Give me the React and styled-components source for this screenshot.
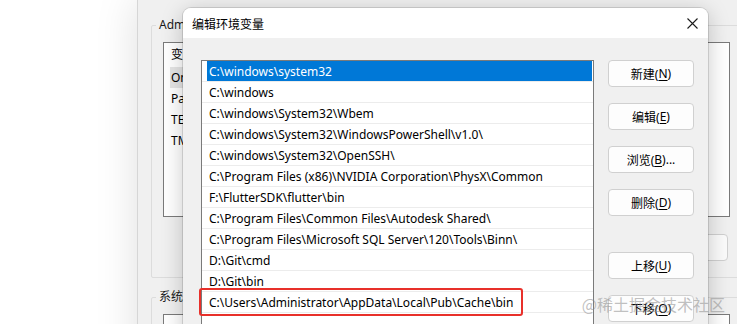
import styled, { createGlobalStyle } from 'styled-components';

const GlobalStyle = createGlobalStyle`
  html, body {
    margin: 0;
    padding: 0;
    background: #ffffff;
  }
  body {
    font-family: "Noto Sans", "Noto Sans CJK SC", sans-serif;
    color: #000;
  }
`;

const userVars = ['OneDrive', 'Path', 'TEMP', 'TMP'];

const paths = [
    'C:\\windows\\system32',
    'C:\\windows',
    'C:\\windows\\System32\\Wbem',
    'C:\\windows\\System32\\WindowsPowerShell\\v1.0\\',
    'C:\\windows\\System32\\OpenSSH\\',
    'C:\\Program Files (x86)\\NVIDIA Corporation\\PhysX\\Common',
    'F:\\FlutterSDK\\flutter\\bin',
    'C:\\Program Files\\Common Files\\Autodesk Shared\\',
    'C:\\Program Files\\Microsoft SQL Server\\120\\Tools\\Binn\\',
    'D:\\Git\\cmd',
    'D:\\Git\\bin',
    'C:\\Users\\Administrator\\AppData\\Local\\Pub\\Cache\\bin'
];

const buttons = [
    { text: '新建', key: 'N' },
    { text: '编辑', key: 'E' },
    { text: '浏览', key: 'B', more: true },
    { text: '删除', key: 'D' },
    { text: '上移', key: 'U', spaced: true },
    { text: '下移', key: 'O' }
];

export default function App() {
    return (
        <Desktop>
            <GlobalStyle />
            <BackWindow>
                <Group>
                    <Legend>Administrator 的用户变量(U)</Legend>
                    <VarList>
                        <VarHeader>变量</VarHeader>
                        {userVars.map((v, i) => (
                            <VarRow key={v} $active={i === 0}>{v}</VarRow>
                        ))}
                    </VarList>
                    <BackButtons>
                        <BackButton>新建(N)...</BackButton>
                        <BackButton>编辑(E)...</BackButton>
                        <BackButton>删除(D)</BackButton>
                    </BackButtons>
                </Group>
                <Group $second>
                    <Legend>系统变量(S)</Legend>
                    <VarList />
                </Group>
            </BackWindow>

            <Dialog>
                <TitleBar>
                    <span>编辑环境变量</span>
                    <svg width="11" height="11" viewBox="0 0 11 11">
                        <path d="M0.5 0.5 L10.5 10.5 M10.5 0.5 L0.5 10.5" stroke="#1b1b1b" strokeWidth="1.1" />
                    </svg>
                </TitleBar>
                <Body>
                    <PathList>
                        {paths.map((p, i) => (
                            <PathRow key={p}>
                                <PathText $selected={i === 0}>
                                    <Label>
                                        {p}
                                        {i === paths.length - 1 && <Mark />}
                                    </Label>
                                </PathText>
                            </PathRow>
                        ))}
                    </PathList>
                    <ButtonColumn>
                        {buttons.map(b => (
                            <Button key={b.key} $spaced={b.spaced}>
                                {b.text}(<u>{b.key}</u>){b.more ? '...' : ''}
                            </Button>
                        ))}
                    </ButtonColumn>
                </Body>
            </Dialog>

            <Watermark>@稀土掘金技术社区</Watermark>
        </Desktop>
    );
}

const Desktop = styled.div`
    position: relative;
    width: 737px;
    height: 324px;
    overflow: hidden;
    background: #ffffff;
    font-size: 12px;
`;

const BackWindow = styled.div`
    position: absolute;
    left: 137px;
    top: -1px;
    width: 640px;
    height: 420px;
    box-sizing: border-box;
    padding: 17px 0 0 13px;
    background: #f0f0f0;
    border-left: 1px solid #d6d6d6;
    box-shadow: 0 0 40px rgba(0, 0, 0, 0.13);
    display: flex;
    flex-direction: column;
`;

const Group = styled.fieldset`
    margin: ${props => props.$second ? '10px' : '0'} 0 0 0;
    padding: 8px 11px 16px 11px;
    width: 600px;
    border: 1px solid #dcdcdc;
    border-radius: 2px;
    min-inline-size: 0;
`;

/* only the start of the caption shows past the dialog */
const Legend = styled.legend`
    margin-left: -7px;
    padding: 0 0 0 3px;
    max-width: 24px;
    overflow: hidden;
    white-space: nowrap;
    font-size: 12px;
    line-height: 18px;
    color: #1a1a1a;
`;

const VarList = styled.div`
    width: 567px;
    height: 175px;
    box-sizing: border-box;
    background: #ffffff;
    border: 1px solid #7a7a7a;
    padding-left: 6px;
`;

const VarHeader = styled.div`
    height: 24px;
    line-height: 24px;
    padding-left: 1px;
`;

const VarRow = styled.div`
    width: 140px;
    height: 21px;
    line-height: 21px;
    padding-left: 1px;
    background: ${props => props.$active ? '#e5e5e5' : 'transparent'};
`;

const BackButtons = styled.div`
    display: flex;
    justify-content: flex-end;
    gap: 12px;
    margin-top: 17px;
    width: 565px;
`;

const BackButton = styled.div`
    width: 86px;
    height: 27px;
    box-sizing: border-box;
    border: 1px solid #d0d0d0;
    border-radius: 4px;
    background: #fbfbfb;
    display: flex;
    align-items: center;
    justify-content: center;
`;

const Dialog = styled.div`
    position: absolute;
    left: 183px;
    top: 8px;
    width: 525px;
    height: 340px;
    background: #f0f0f0;
    border-radius: 8px 8px 0 0;
    box-shadow: 0 0 0 1px rgba(0, 0, 0, 0.12), 0 4px 22px rgba(0, 0, 0, 0.22);
    display: flex;
    flex-direction: column;
`;

const TitleBar = styled.div`
    height: 30px;
    flex-shrink: 0;
    background: #ffffff;
    border-radius: 8px 8px 0 0;
    display: flex;
    align-items: center;
    justify-content: space-between;
    padding: 1px 10px 0 9px;
    box-sizing: border-box;
    font-size: 12px;
    color: #000;
`;

const Body = styled.div`
    display: flex;
    gap: 14px;
    padding: 22px 14px 0 18px;
`;

const PathList = styled.div`
    width: 393px;
    height: 300px;
    flex-shrink: 0;
    box-sizing: border-box;
    background: #ffffff;
    border: 1px solid #7a7a7a;
`;

const PathRow = styled.div`
    height: 21px;
    box-sizing: border-box;
    border-bottom: 1px solid #ececec;
    padding: 0 1px 0 5px;
    display: flex;
`;

const PathText = styled.div`
    flex: 1;
    display: flex;
    padding-left: 2px;
    background: ${props => props.$selected ? '#0078d7' : 'transparent'};
    color: ${props => props.$selected ? '#ffffff' : '#000000'};
`;

const Label = styled.span`
    position: relative;
    display: flex;
    align-items: center;
    white-space: nowrap;
`;

const Mark = styled.span`
    position: absolute;
    top: -4px;
    bottom: -4px;
    left: -10px;
    right: -10px;
    border: 2px solid #e8302a;
    border-radius: 3px;
`;

const ButtonColumn = styled.div`
    display: flex;
    flex-direction: column;
    gap: 16px;
`;

const Button = styled.div`
    width: 86px;
    height: 27px;
    box-sizing: border-box;
    margin-top: ${props => props.$spaced ? '20px' : '0'};
    border: 1px solid #d0d0d0;
    border-radius: 4px;
    background: #fdfdfd;
    display: flex;
    align-items: center;
    justify-content: center;
    font-size: 12px;
    u {
        text-underline-offset: 2px;
    }
`;

const Watermark = styled.div`
    position: absolute;
    right: 12px;
    bottom: 8px;
    font-size: 16px;
    color: rgba(140, 140, 140, 0.55);
    font-family: "Noto Sans CJK SC", sans-serif;
`;
